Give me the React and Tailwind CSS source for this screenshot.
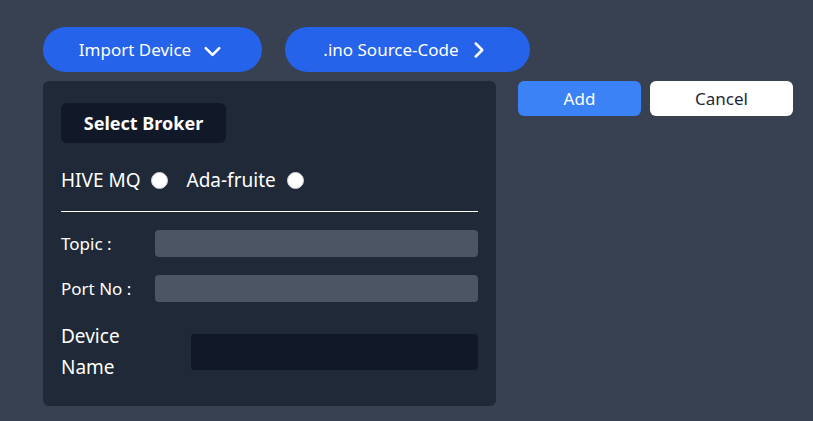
import React, { useState } from "react";
import { ChevronDown, ChevronRight } from "lucide-react";

function App() {
  const [broker, setBroker] = useState("");

  return (
    <div className="min-h-screen bg-[#374151] pt-[27px] pl-[43px] font-['Noto_Sans',sans-serif] text-white">
      {/* top buttons */}
      <div className="flex gap-[23px]">
        <button className="flex h-[45px] w-[219px] items-center justify-center gap-[8px] rounded-full bg-[#2563eb] text-[17px]">
          Import Device
          <ChevronDown size={27} strokeWidth={2.3} className="translate-y-[2px]" />
        </button>
        <button className="flex h-[45px] w-[245px] items-center justify-center gap-[7px] rounded-full bg-[#2563eb] text-[17px]">
          .ino Source-Code
          <ChevronRight size={26} strokeWidth={2.3} />
        </button>
      </div>

      <div className="mt-[9px] flex items-start gap-[22px]">
        {/* form panel */}
        <div className="w-[453px] rounded-md bg-[#1f2937] px-[18px] pt-[22px] pb-[23px]">
          <button className="h-[40px] w-[165px] rounded-md bg-[#111827] text-[18px] font-bold">
            Select Broker
          </button>

          <div className="mt-[23px] flex h-[28px] items-center text-[19px]">
            <label className="flex items-center gap-[10px]">
              HIVE MQ
              <input
                type="radio"
                name="broker"
                checked={broker === "hive"}
                onChange={() => setBroker("hive")}
                className="h-[17px] w-[17px] appearance-none rounded-full border border-gray-300 bg-white checked:border-[5px] checked:border-[#2563eb]"
              />
            </label>
            <label className="ml-[19px] flex items-center gap-[11px]">
              Ada-fruite
              <input
                type="radio"
                name="broker"
                checked={broker === "ada"}
                onChange={() => setBroker("ada")}
                className="h-[17px] w-[17px] appearance-none rounded-full border border-gray-300 bg-white checked:border-[5px] checked:border-[#2563eb]"
              />
            </label>
          </div>

          <hr className="mt-[17px] border-white" />

          <div className="mt-[18px] flex h-[27px] items-center text-[17px]">
            <span className="w-[94px] shrink-0">Topic :</span>
            <input type="text" className="h-[27px] min-w-0 flex-1 rounded-sm bg-[#4b5563] px-2 outline-none" />
          </div>
          <div className="mt-[18px] flex h-[27px] items-center text-[17px]">
            <span className="w-[94px] shrink-0">Port No :</span>
            <input type="text" className="h-[27px] min-w-0 flex-1 rounded-sm bg-[#4b5563] px-2 outline-none" />
          </div>
          <div className="mt-[19px] flex items-center text-[19px] leading-[31px]">
            <span className="w-[130px] shrink-0">
              Device
              <br />
              Name
            </span>
            <input type="text" className="h-[36px] min-w-0 flex-1 rounded-sm bg-[#111827] px-2 outline-none" />
          </div>
        </div>

        {/* actions */}
        <div className="flex gap-[9px]">
          <button className="h-[35px] w-[123px] rounded-md bg-[#3b82f6] text-[17px]">Add</button>
          <button className="h-[35px] w-[143px] rounded-md bg-white text-[17px] text-[#1f2937]">
            Cancel
          </button>
        </div>
      </div>
    </div>
  );
}

export default App;
